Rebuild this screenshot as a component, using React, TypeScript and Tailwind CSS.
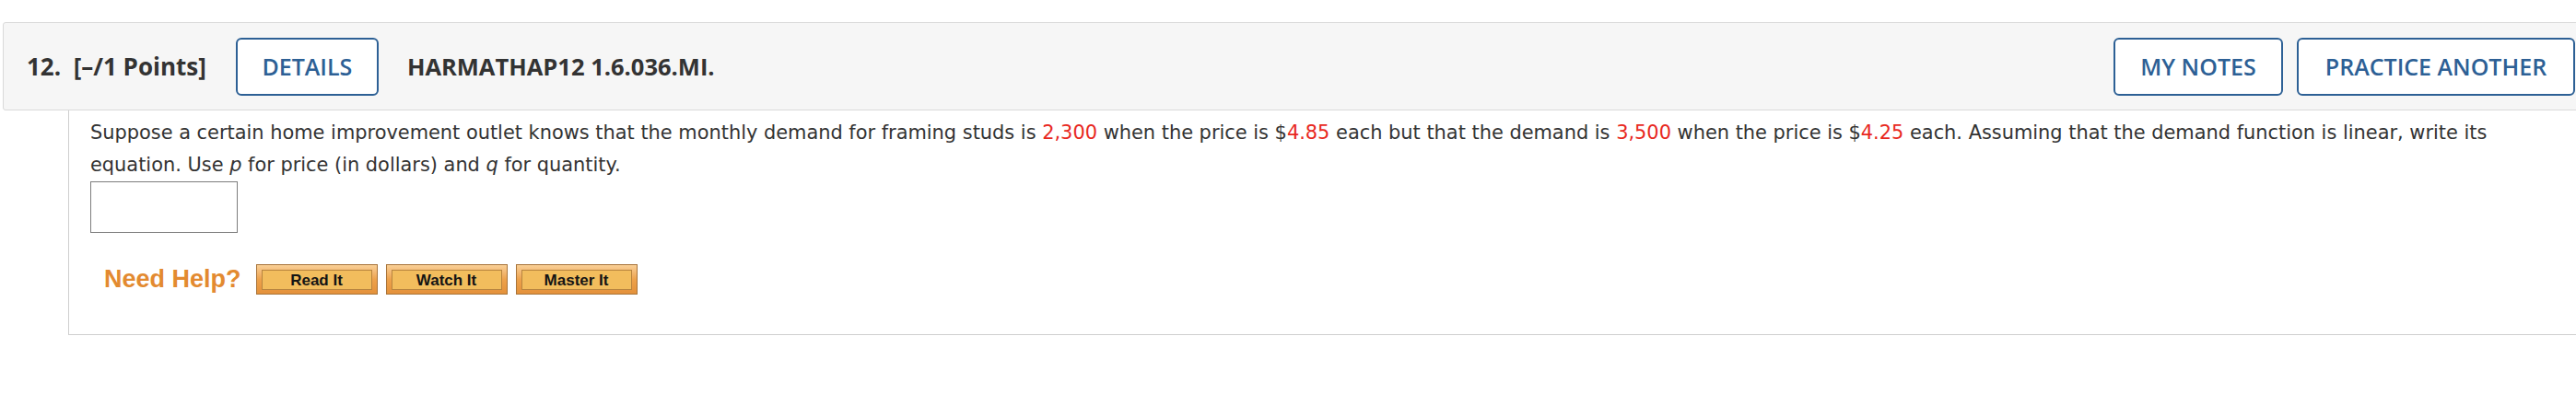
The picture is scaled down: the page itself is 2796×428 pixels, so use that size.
import React from "react";

const openSans = "font-['Open_Sans',sans-serif]";

function HelpButton({ label }: { label: string }) {
  return (
    <div className="w-[132px] h-[33px] border border-[#a8743a] bg-linear-to-b from-[#f9cf95] via-[#eda24c] to-[#e4913a] px-[5px] pt-[5px] pb-[4px]">
      <div className="h-full border border-[#b8843f] bg-[#f2bd5d] flex items-center justify-center font-['Liberation_Sans',Arial,sans-serif] font-bold text-[17px] text-[#141414] leading-none">
        {label}
      </div>
    </div>
  );
}

function OutlineButton({ label, width }: { label: string; width: string }) {
  return (
    <div
      className={`${width} h-[63px] shrink-0 border-2 border-[#2d6095] rounded-[6px] bg-white flex items-center justify-center text-[25px] font-semibold text-[#2d6095] leading-none`}
    >
      {label}
    </div>
  );
}

export default function App() {
  return (
    <div className="w-[2796px] h-[428px] overflow-hidden bg-white pt-6">
      <div className="w-[2810px] ml-[3px]">
        {/* question header */}
        <div
          className={`${openSans} h-[96px] border border-[#dadada] rounded-[3px] bg-[#f6f6f6] flex items-center pl-[25px] pr-[17px] text-[#333]`}
        >
          <span className="text-[26px] font-bold whitespace-pre">12.  [–/1 Points]</span>
          <div className="ml-[32px]">
            <OutlineButton label="DETAILS" width="w-[155px]" />
          </div>
          <span className="ml-[31px] text-[25.5px] font-bold">HARMATHAP12 1.6.036.MI.</span>
          <div className="ml-auto flex gap-[15px]">
            <OutlineButton label="MY NOTES" width="w-[184px]" />
            <OutlineButton label="PRACTICE ANOTHER" width="w-[302px]" />
          </div>
        </div>

        {/* question body */}
        <div className="ml-[71px] h-[244px] border-l border-b border-[#cfcfcf] pl-[23px] pt-[7px]">
          <p className="font-['DejaVu_Sans',Verdana,sans-serif] text-[20.9px] leading-[35px] text-[#333] whitespace-nowrap">
            Suppose a certain home improvement outlet knows that the monthly demand for framing studs is{" "}
            <span className="text-[#e8281e]">2,300</span> when the price is $
            <span className="text-[#e8281e]">4.85</span> each but that the demand is{" "}
            <span className="text-[#e8281e]">3,500</span> when the price is $
            <span className="text-[#e8281e]">4.25</span> each. Assuming that the demand function is linear, write its
            <br />
            equation. Use <i>p</i> for price (in dollars) and <i>q</i> for quantity.
          </p>
          <div className="w-[160px] h-[56px] border border-[#7d7d7d] bg-white" />

          <div className="mt-[34px] flex items-center">
            <span className="ml-[15px] mr-[16px] font-['Liberation_Sans',Arial,sans-serif] font-bold text-[27px] leading-none text-[#e38a30]">
              Need Help?
            </span>
            <div className="flex gap-[9px]">
              <HelpButton label="Read It" />
              <HelpButton label="Watch It" />
              <HelpButton label="Master It" />
            </div>
          </div>
        </div>
      </div>
    </div>
  );
}
